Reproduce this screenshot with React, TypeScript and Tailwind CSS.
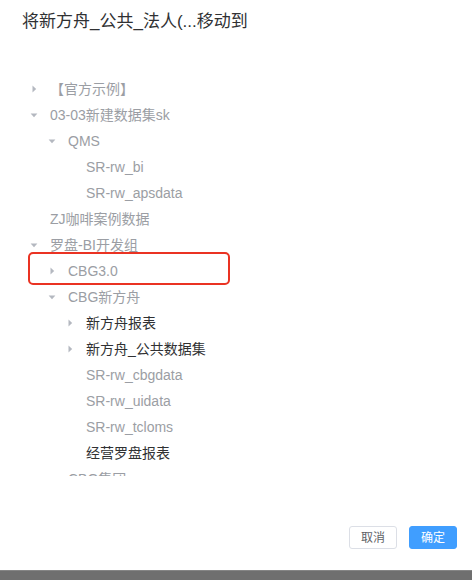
import React from "react";

type Node = {
  label: string;
  level: 0 | 1 | 2;
  caret?: "right" | "down";
  dark?: boolean;
};

const nodes: Node[] = [
  { label: "【官方示例】", level: 0, caret: "right" },
  { label: "03-03新建数据集sk", level: 0, caret: "down" },
  { label: "QMS", level: 1, caret: "down" },
  { label: "SR-rw_bi", level: 2 },
  { label: "SR-rw_apsdata", level: 2 },
  { label: "ZJ咖啡案例数据", level: 0 },
  { label: "罗盘-BI开发组", level: 0, caret: "down" },
  { label: "CBG3.0", level: 1, caret: "right" },
  { label: "CBG新方舟", level: 1, caret: "down" },
  { label: "新方舟报表", level: 2, caret: "right", dark: true },
  { label: "新方舟_公共数据集", level: 2, caret: "right", dark: true },
  { label: "SR-rw_cbgdata", level: 2 },
  { label: "SR-rw_uidata", level: 2 },
  { label: "SR-rw_tcloms", level: 2 },
  { label: "经营罗盘报表", level: 2, dark: true },
  { label: "CBG集团", level: 1, caret: "down" },
];

const indent = ["pl-[26px]", "pl-[44px]", "pl-[62px]"];

function Caret({ dir }: { dir?: "right" | "down" }) {
  return (
    <span className="flex h-4 w-4 shrink-0 items-center justify-center">
      {dir === "right" && (
        <svg width="8" height="8" viewBox="0 0 8 8">
          <path d="M2.5 0.6 L6.2 4 L2.5 7.4 Z" fill="#b4b8c0" />
        </svg>
      )}
      {dir === "down" && (
        <svg width="8" height="8" viewBox="0 0 8 8">
          <path d="M0.6 2.5 L7.4 2.5 L4 6.2 Z" fill="#b4b8c0" />
        </svg>
      )}
    </span>
  );
}

function TreeRow({ node }: { node: Node }) {
  return (
    <div className={`flex h-[26px] items-center gap-2 ${indent[node.level]}`}>
      <Caret dir={node.caret} />
      <span
        className={`whitespace-nowrap text-[14px] ${
          node.dark ? "text-[#303133]" : "text-[#9b9ea4]"
        }`}
      >
        {node.label}
      </span>
    </div>
  );
}

export default function App() {
  return (
    <div
      className="flex h-[580px] w-[472px] flex-col overflow-hidden"
      style={{ fontFamily: '"Liberation Sans", "Noto Sans CJK SC", sans-serif' }}
    >
      <div className="relative flex h-[570px] flex-col bg-white">
        <h1 className="px-[22px] pt-[10px] text-[17px] leading-[24px] font-normal text-[#303133]">
          将新方舟_公共_法人(...移动到
        </h1>
        <div className="mt-[42px] h-[400px] overflow-hidden">
          {nodes.map((n) => (
            <TreeRow key={n.label} node={n} />
          ))}
        </div>
        <div className="mt-[50px] flex justify-end gap-3 pr-[15px]">
          <button className="h-[23px] w-[48px] rounded-[3px] border border-[#dcdfe6] bg-white text-[12px] text-[#606266]">
            取消
          </button>
          <button className="h-[23px] w-[48px] rounded-[3px] border border-[#409eff] bg-[#409eff] text-[12px] text-white">
            确定
          </button>
        </div>
        {/* red annotation box round the CBG3.0 row */}
        <div className="absolute top-[252px] left-[28px] h-[33px] w-[202px] rounded-[5px] border-2 border-[#ea3323]" />
      </div>
      <div className="h-[10px] border-t border-[#858585] bg-[#6f6f6f]" />
    </div>
  );
}
